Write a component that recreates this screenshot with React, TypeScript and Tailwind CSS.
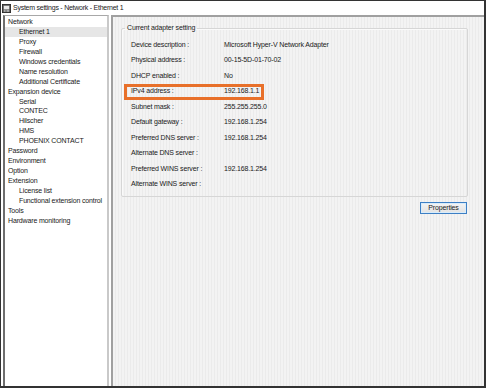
const tree: { label: string; child?: boolean; active?: boolean }[] = [
  { label: "Network" },
  { label: "Ethernet 1", child: true, active: true },
  { label: "Proxy", child: true },
  { label: "Firewall", child: true },
  { label: "Windows credentials", child: true },
  { label: "Name resolution", child: true },
  { label: "Additional Certificate", child: true },
  { label: "Expansion device" },
  { label: "Serial", child: true },
  { label: "CONTEC", child: true },
  { label: "Hilscher", child: true },
  { label: "HMS", child: true },
  { label: "PHOENIX CONTACT", child: true },
  { label: "Password" },
  { label: "Environment" },
  { label: "Option" },
  { label: "Extension" },
  { label: "License list", child: true },
  { label: "Functional extension control", child: true },
  { label: "Tools" },
  { label: "Hardware monitoring" },
];

const settings: [string, string][] = [
  ["Device description :", "Microsoft Hyper-V Network Adapter"],
  ["Physical address :", "00-15-5D-01-70-02"],
  ["DHCP enabled :", "No"],
  ["IPv4 address :", "192.168.1.1"],
  ["Subnet mask :", "255.255.255.0"],
  ["Default gateway :", "192.168.1.254"],
  ["Preferred DNS server :", "192.168.1.254"],
  ["Alternate DNS server :", ""],
  ["Preferred WINS server :", "192.168.1.254"],
  ["Alternate WINS server :", ""],
];

function WindowIcon() {
  return (
    <svg width="9" height="9" viewBox="0 0 10 10" className="shrink-0">
      <rect x="0.5" y="0.5" width="9" height="9" fill="#5a5a5a" stroke="#2a2a2a" />
      <rect x="2" y="2" width="6" height="4" fill="#e8e8e8" />
      <rect x="2" y="7" width="2" height="1.5" fill="#cfcfcf" />
      <rect x="5" y="7" width="3" height="1.5" fill="#cfcfcf" />
    </svg>
  );
}

export default function App() {
  return (
    <div className="w-[486px] h-[388px] flex flex-col bg-white border-t border-l border-r-2 border-b-2 border-[#333] font-['Liberation_Sans',Arial,sans-serif] text-[7px] tracking-[-0.15px] text-[#1a1a1a]">
      <div className="h-[14px] flex items-center gap-[2px] pl-[1px]">
        <WindowIcon />
        <span className="leading-[14px] tracking-[-0.25px]">System settings - Network - Ethernet 1</span>
      </div>

      <div className="flex-1 flex min-h-0 pl-[2px]">
        <div className="w-[106px] border-l-2 border-r-2 border-t border-l-[#6e6e6e] border-r-[#c9c9c9] border-t-[#a8a8a8] pt-[1px]">
          {tree.map((item) => (
            <div
              key={item.label}
              className={`h-[9.95px] leading-[9.95px] whitespace-nowrap ${item.child ? "pl-[14px]" : "pl-[3px]"} ${item.active ? "bg-[#e6e6e6]" : ""}`}
            >
              {item.label}
            </div>
          ))}
        </div>

        <div className="flex-1 ml-[2px] border-l-2 border-t-2 border-[#a0a0a0] bg-[repeating-linear-gradient(90deg,#f3f3f3_0px,#f3f3f3_2px,#ebebeb_2px,#ebebeb_3px)]">
          <fieldset className="mt-[6px] ml-[8px] mr-[16px] border border-[#d6d6d6] rounded-[2px] shadow-[inset_1px_1px_0_#fafafa] pt-[4px] pb-[4px]">
            <legend className="ml-[3px] px-[2px] leading-[10px]">Current adapter setting</legend>
            {settings.map(([label, value]) => (
              <div key={label} className="relative grid grid-cols-[93px_1fr] h-[15.5px] items-center pl-[9px] whitespace-nowrap">
                <span>{label}</span>
                <span>{value}</span>
                {label === "IPv4 address :" && (
                  <span className="absolute left-[2px] top-0 w-[140px] h-[16px] border-[3px] border-[#e8702a]" />
                )}
              </div>
            ))}
          </fieldset>

          <div className="flex justify-end mr-[17px] mt-[5px]">
            <button className="w-[47px] h-[12px] border border-[#3d7fc4] bg-gradient-to-b from-[#f4f4f4] to-[#e2e2e2] shadow-[inset_0_0_0_1px_#d8ecfb] leading-[10px] text-[7px]">
              Properties
            </button>
          </div>
        </div>
      </div>
    </div>
  );
}
